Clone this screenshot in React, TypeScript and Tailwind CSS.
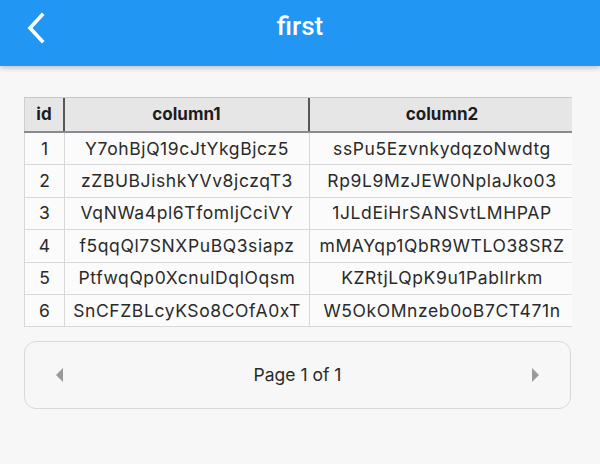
import React from 'react';

interface Row {
  id: number;
  column1: string;
  column2: string;
}

const rows: Row[] = [
  { id: 1, column1: 'Y7ohBjQ19cJtYkgBjcz5', column2: 'ssPu5EzvnkydqzoNwdtg' },
  { id: 2, column1: 'zZBUBJishkYVv8jczqT3', column2: 'Rp9L9MzJEW0NplaJko03' },
  { id: 3, column1: 'VqNWa4pl6TfomljCciVY', column2: '1JLdEiHrSANSvtLMHPAP' },
  { id: 4, column1: 'f5qqQl7SNXPuBQ3siapz', column2: 'mMAYqp1QbR9WTLO38SRZ' },
  { id: 5, column1: 'PtfwqQp0XcnulDqlOqsm', column2: 'KZRtjLQpK9u1Pabllrkm' },
  { id: 6, column1: 'SnCFZBLcyKSo8COfA0xT', column2: 'W5OkOMnzeb0oB7CT471n' },
];

const App: React.FC = () => {
  return (
    <div className="w-[600px] h-[464px] bg-[#f7f7f7] overflow-hidden" style={{ fontFamily: 'Inter, "Liberation Sans", sans-serif' }}>
      {/* barra superior */}
      <div className="h-[66px] bg-[#2196f3] flex items-start pt-[11px] shadow-[0_2px_5px_rgba(0,0,0,0.22)] relative z-10">
        <div className="w-[70px] flex justify-start pl-[26px] pt-[1px]">
          <svg width="20" height="32" viewBox="0 0 20 32" fill="none">
            <path d="M16 3 L4 16 L16 29" stroke="white" strokeWidth="3.6" strokeLinecap="square" />
          </svg>
        </div>
        <div className="flex-1 text-center text-white text-[26px] font-medium leading-[30px]" style={{ fontFamily: 'Roboto, sans-serif' }}>
          first
        </div>
        <div className="w-[70px]" />
      </div>

      <div className="px-[24px] pt-[31px]">
        {/* tabela */}
        <div className="w-[548px] overflow-hidden">
          <div className="w-[550px] text-[17.5px] text-[#2a2a2a]">
            <div className="flex h-[36px] bg-[#e6e6e6] border-t border-t-[#c8c8cc] border-b-2 border-b-[#8a8a90] font-bold text-[17px] text-[#1c1c22]">
              <div className="w-[41px] flex items-center justify-center border-l border-l-[#cfcfcf] border-r-2 border-r-[#55555c]">id</div>
              <div className="w-[245px] flex items-center justify-center border-r-2 border-r-[#55555c]">column1</div>
              <div className="flex-1 flex items-center justify-center">column2</div>
            </div>
            {rows.map((row) => (
              <div key={row.id} className="flex h-[32.4px] bg-[#fbfbfb] border-b border-b-[#d8d8da]">
                <div className="w-[41px] flex items-center justify-center border-l border-l-[#d8d8da] border-r border-r-[#d8d8da]">{row.id}</div>
                <div className="w-[245px] flex items-center justify-center border-r border-r-[#d8d8da] whitespace-nowrap tracking-[0.6px]">{row.column1}</div>
                <div className="flex-1 flex items-center justify-center whitespace-nowrap tracking-[0.6px]">{row.column2}</div>
              </div>
            ))}
          </div>
        </div>

        {/* paginação */}
        <div className="mt-[14px] w-[547px] h-[68px] border border-[#d9d9dc] rounded-[12px] flex items-center justify-between px-[31px]">
          <svg width="8" height="14" viewBox="0 0 8 14">
            <path d="M7 0 L0 7 L7 14 Z" fill="#9a9a9a" />
          </svg>
          <span className="text-[17.5px] text-[#2a2a2a]">Page 1 of 1</span>
          <svg width="8" height="14" viewBox="0 0 8 14">
            <path d="M1 0 L8 7 L1 14 Z" fill="#9a9a9a" />
          </svg>
        </div>
      </div>
    </div>
  );
};

export default App;
